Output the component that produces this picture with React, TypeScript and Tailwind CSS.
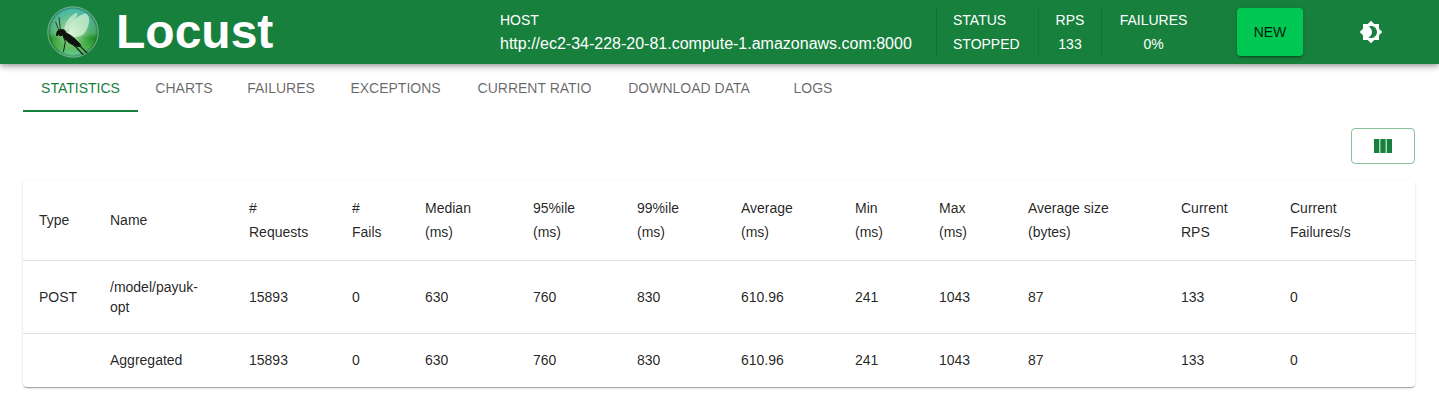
import { useState, type ReactNode } from "react";

const tabs = [
  { label: "Statistics", width: "w-[115px]" },
  { label: "Charts", width: "w-[92px]" },
  { label: "Failures", width: "w-[102px]" },
  { label: "Exceptions", width: "w-[127px]" },
  { label: "Current ratio", width: "w-[151px]" },
  { label: "Download data", width: "w-[158px]" },
  { label: "Logs", width: "w-[90px]" },
];

const columns = [
  { title: "Type", width: "w-[71px]" },
  { title: "Name", width: "w-[139px]" },
  { title: "#\nRequests", width: "w-[103px]" },
  { title: "#\nFails", width: "w-[73px]" },
  { title: "Median\n(ms)", width: "w-[108px]" },
  { title: "95%ile\n(ms)", width: "w-[104px]" },
  { title: "99%ile\n(ms)", width: "w-[104px]" },
  { title: "Average\n(ms)", width: "w-[114px]" },
  { title: "Min\n(ms)", width: "w-[84px]" },
  { title: "Max\n(ms)", width: "w-[89px]" },
  { title: "Average size\n(bytes)", width: "w-[153px]" },
  { title: "Current\nRPS", width: "w-[109px]" },
  { title: "Current\nFailures/s", width: "w-[141px]" },
];

const rows = [
  ["POST", "/model/payuk-opt", "15893", "0", "630", "760", "830", "610.96", "241", "1043", "87", "133", "0"],
  ["", "Aggregated", "15893", "0", "630", "760", "830", "610.96", "241", "1043", "87", "133", "0"],
];

function Logo() {
  return (
    <svg viewBox="0 0 52 52" className="size-[52px]" aria-hidden="true">
      <defs>
        <linearGradient id="ball" x1="0" y1="0" x2="0" y2="1">
          <stop offset="0" stopColor="#4cc0b4" />
          <stop offset="0.3" stopColor="#4fb08a" />
          <stop offset="0.52" stopColor="#4aa968" />
          <stop offset="0.62" stopColor="#1f9226" />
          <stop offset="0.8" stopColor="#43ad46" />
          <stop offset="1" stopColor="#6cd0a8" />
        </linearGradient>
        <radialGradient id="glow" cx="0.46" cy="0.52" r="0.44">
          <stop offset="0" stopColor="#d9f5d2" stopOpacity="0.9" />
          <stop offset="0.5" stopColor="#a5dfa0" stopOpacity="0.55" />
          <stop offset="1" stopColor="#7fd080" stopOpacity="0" />
        </radialGradient>
        <radialGradient id="edge" cx="0.5" cy="0.5" r="0.5">
          <stop offset="0.88" stopColor="#0a4a20" stopOpacity="0" />
          <stop offset="1" stopColor="#0a4a20" stopOpacity="0.55" />
        </radialGradient>
      </defs>
      <circle cx="26" cy="26" r="25" fill="url(#ball)" />
      <circle cx="26" cy="26" r="25" fill="url(#glow)" />
      <circle cx="26" cy="26" r="25" fill="url(#edge)" />
      <circle cx="26" cy="26" r="25.2" fill="none" stroke="#8fc4a2" strokeWidth="0.8" />
      <path d="M17 25C17 18 23 9 30 6.500c2 1-3 10-10 18z" fill="#e2f7e2" fillOpacity="0.6" />
      <path d="M21 28C22 18 30 9 38 7.500c6 1 5 12 0 19-4 5-9 5-14 4z" fill="#dcf5da" fillOpacity="0.7" />
      <path
        d="M9.500 28l1-3 3-1.500 4 .5 1.500 3 4 2 5 4 5.500 5.500-.5 2-4.500-.5-6-3-5-4.500-2-3.500-2.500 1-1.500-2-1.500 2z"
        fill="#0d120d"
        stroke="#0d120d"
        strokeLinejoin="round"
      />
      <g fill="none" stroke="#142014" strokeLinecap="round">
        <path d="M12 25L8.700 16M13.500 25L12 11.500" strokeWidth="0.8" />
        <path d="M16.500 31l1.800 5-1.800 9.500" strokeWidth="1" />
        <path d="M23 36l6 5 7 7.500M32 39l8 8" strokeWidth="1.1" />
      </g>
    </svg>
  );
}

function Stat({ label, className, children }: { label: string; className: string; children: ReactNode }) {
  return (
    <div className={`flex flex-col justify-center border-l border-black/12 pl-4 ${className}`}>
      <span className="text-sm/[24px] uppercase">{label}</span>
      <span className="text-sm/[24px]">{children}</span>
    </div>
  );
}

export default function App() {
  const [active, setActive] = useState("Statistics");

  return (
    <div className="bg-white font-['Liberation_Sans',Arial,sans-serif] text-black/87">
      <header className="flex min-h-16 items-center justify-between bg-[#17803d] pr-12 pl-[47px] text-white shadow-[0_2px_4px_-1px_rgba(0,0,0,0.2),0_4px_5px_0_rgba(0,0,0,0.14),0_1px_10px_0_rgba(0,0,0,0.12)]">
        <a href="#" className="flex items-center gap-[17px]">
          <Logo />
          <h1 className="text-5xl font-bold">Locust</h1>
        </a>
        <div className="flex items-center gap-12">
          <div className="flex h-12 gap-4">
            <div className="flex min-w-[420px] flex-col justify-center">
              <span className="text-sm/[24px] uppercase">Host</span>
              <span className="text-base/[24px]">http://ec2-34-228-20-81.compute-1.amazonaws.com:8000</span>
            </div>
            <Stat label="Status" className="min-w-[86px] items-start">
              STOPPED
            </Stat>
            <Stat label="RPS" className="min-w-[47px] items-center">
              133
            </Stat>
            <Stat label="Failures" className="min-w-[88px] items-center">
              0%
            </Stat>
          </div>
          <button
            type="button"
            className="h-12 w-[66px] rounded bg-[#00c853] text-sm text-black/87 uppercase shadow-[0_3px_1px_-2px_rgba(0,0,0,0.2),0_2px_2px_0_rgba(0,0,0,0.14),0_1px_5px_0_rgba(0,0,0,0.12)]"
          >
            New
          </button>
          <button type="button" aria-label="Toggle dark mode" className="rounded-full p-2">
            <svg viewBox="0 0 24 24" className="size-6" fill="currentColor" aria-hidden="true">
              <path d="M20 8.690V4h-4.690L12 .69 8.690 4H4v4.690L.69 12 4 15.310V20h4.690L12 23.310 15.310 20H20v-4.690L23.310 12 20 8.690zM12 18c-.89 0-1.740-.2-2.500-.55C11.560 16.500 13 14.420 13 12s-1.440-4.500-3.500-5.450C10.260 6.200 11.110 6 12 6c3.310 0 6 2.690 6 6s-2.690 6-6 6z" />
            </svg>
          </button>
        </div>
      </header>

      <main className="pr-6 pb-4 pl-[23px]">
        <nav role="tablist" className="flex h-12 items-stretch">
          {tabs.map((tab) => (
            <button
              key={tab.label}
              type="button"
              role="tab"
              aria-selected={active === tab.label}
              onClick={() => setActive(tab.label)}
              className={`${tab.width} shrink-0 border-b-2 pt-0.5 text-sm whitespace-nowrap uppercase ${
                active === tab.label ? "border-[#17803d] text-[#17803d]" : "border-transparent text-black/60"
              }`}
            >
              {tab.label}
            </button>
          ))}
        </nav>

        <div className="flex justify-end py-4">
          <button
            type="button"
            aria-label="Select columns"
            className="flex h-9 w-16 items-center justify-center rounded border border-[#17803d]/50 text-[#17803d]"
          >
            <svg viewBox="0 0 24 24" className="size-6" fill="currentColor" aria-hidden="true">
              <path d="M14.670 5v14H9.330V5h5.340zm1 14H21V5h-5.330v14zm-7.340 0V5H3v14h5.330z" />
            </svg>
          </button>
        </div>

        <div className="rounded shadow-[0_2px_1px_-1px_rgba(0,0,0,0.2),0_1px_1px_0_rgba(0,0,0,0.14),0_1px_3px_0_rgba(0,0,0,0.12)]">
          <table className="w-full table-fixed border-separate border-spacing-0 text-left text-sm/[20px]">
            <colgroup>
              {columns.map((column) => (
                <col key={column.title} className={column.width} />
              ))}
            </colgroup>
            <thead>
              <tr>
                {columns.map((column) => (
                  <th
                    key={column.title}
                    scope="col"
                    className="border-b border-[#e0e0e0] p-4 leading-6 font-normal whitespace-pre-line"
                  >
                    {column.title}
                  </th>
                ))}
              </tr>
            </thead>
            <tbody>
              {rows.map((row) => (
                <tr key={row[1]} className="group">
                  {row.map((value, i) => (
                    <td
                      key={columns[i].title}
                      className="border-b border-[#e0e0e0] p-4 group-last:border-transparent"
                    >
                      {value}
                    </td>
                  ))}
                </tr>
              ))}
            </tbody>
          </table>
        </div>
      </main>
    </div>
  );
}
